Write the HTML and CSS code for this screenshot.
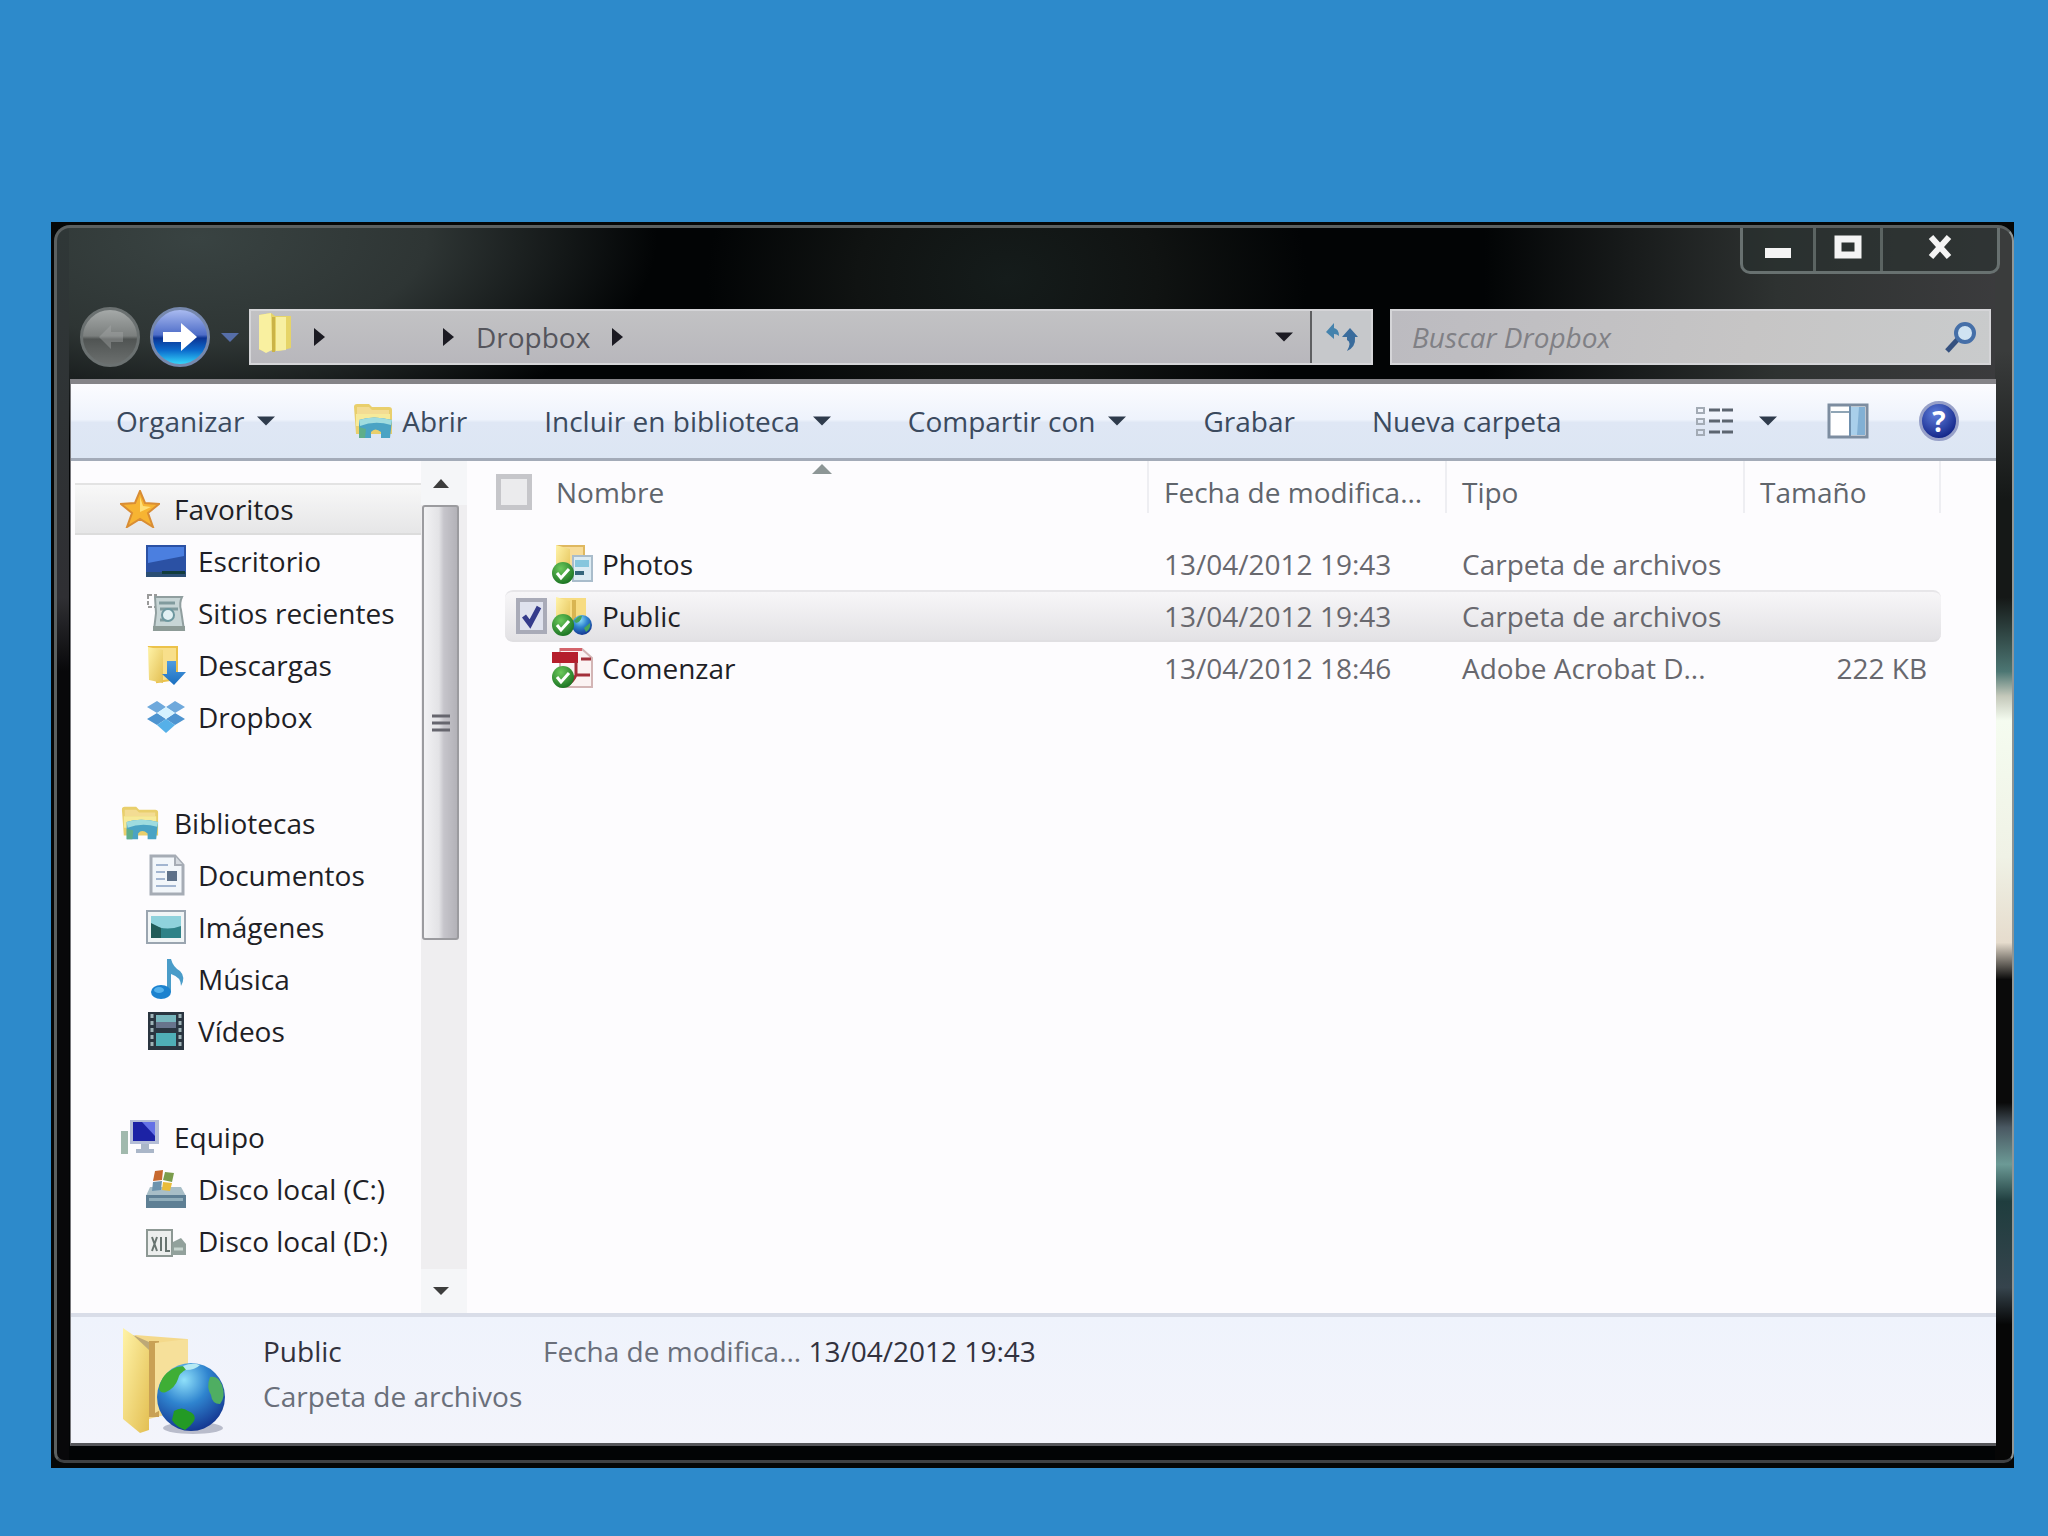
FILE: index.html
```html
<!DOCTYPE html>
<html lang="es">
<head>
    <meta charset="UTF-8">
    <meta name="viewport" content="width=device-width, initial-scale=1.0">
    <title>Dropbox</title>
    <link rel="stylesheet" href="styles.css">
</head>
<body>
    <!-- Shared icons -->
    <svg class="defs" width="0" height="0" aria-hidden="true">
        <defs>
            <linearGradient id="folder" x1="0" y1="0" x2="1" y2="1">
                <stop offset="0" stop-color="#fff3a8"/>
                <stop offset="1" stop-color="#e3bf52"/>
            </linearGradient>
            <linearGradient id="blue" x1="0" y1="0" x2="0" y2="1">
                <stop offset="0" stop-color="#4f9be0"/>
                <stop offset="1" stop-color="#1a6fc0"/>
            </linearGradient>
            <radialGradient id="globe" cx="0.4" cy="0.25" r="0.8">
                <stop offset="0" stop-color="#8fe0fa"/>
                <stop offset="0.45" stop-color="#2f84cf"/>
                <stop offset="1" stop-color="#12308c"/>
            </radialGradient>
            <radialGradient id="green" cx="0.4" cy="0.3" r="0.8">
                <stop offset="0" stop-color="#6cc95c"/>
                <stop offset="1" stop-color="#126a1c"/>
            </radialGradient>
        </defs>
        <symbol id="down" viewBox="0 0 20 10"><path d="M0 0h20L10 10z" fill="currentColor"/></symbol>
        <symbol id="right" viewBox="0 0 11 18"><path d="M0 0l11 9-11 9z" fill="currentColor"/></symbol>
        <symbol id="library" viewBox="0 0 42 36">
            <path d="M2 4q0-3 3-3h12l3 3h17q3 0 3 3v24H4z" fill="#e9cf6c"/>
            <path d="M5 4h12l3 3h17v4H5z" fill="#f3dc93"/>
            <path d="M4 11h34v12H4z" fill="#f6ea9a"/>
            <path d="M7 17q14-5 33 0l-2 18h-9v-6q-6-5-10 0v6H7z" fill="#4aa3c4"/>
            <path d="M7 17q14-5 33 0l-1 5q-16-5-31 1z" fill="#9fdcdf"/>
            <path d="M7 24l7 2-1 9H7z" fill="#5fae8a"/>
        </symbol>
        <symbol id="check" viewBox="0 0 24 24">
            <circle cx="12" cy="12" r="11" fill="url(#green)"/>
            <path d="M6 12l4 5 8-9" fill="none" stroke="#fff" stroke-width="3"/>
        </symbol>
    </svg>

    <main class="window">
        <div class="frame">
            <div class="titlebar">
                <div class="caption">
                    <button class="cap" aria-label="Minimizar"><svg width="28" height="12"><rect x="1" y="1" width="26" height="10" fill="#f4f4f4"/></svg></button>
                    <button class="cap" aria-label="Maximizar"><svg width="28" height="24"><path d="M4 4h20v16H4z" fill="none" stroke="#f4f4f4" stroke-width="7"/></svg></button>
                    <button class="cap close" aria-label="Cerrar"><svg width="26" height="24"><path d="M4 2l18 20M22 2L4 22" stroke="#f4f4f4" stroke-width="6"/></svg></button>
                </div>
            </div>

            <div class="navbar">
                <button class="round back" aria-label="Atrás">
                    <svg width="36" height="36" viewBox="0 0 36 36"><path d="M19 6L7 18l12 12v-7h12V13H19z" fill="#a7aaa9" opacity="0.4"/></svg>
                </button>
                <button class="round forward" aria-label="Adelante">
                    <svg width="36" height="36" viewBox="0 0 36 36"><path d="M19 4l16 14-16 14v-9H1V13h18z" fill="#fff"/></svg>
                </button>
                <button class="history" aria-label="Historial"><svg width="18" height="9"><use href="#down"/></svg></button>
                <nav class="address" aria-label="Ruta">
                    <svg class="path-folder" width="34" height="42" viewBox="0 0 34 42">
                        <path d="M1 3L13 1l4 3h16v32l-12 3L1 38z" fill="#e6d468"/>
                        <path d="M1 3l12-2 1 37-6 3-7-4z" fill="#f9f0a0"/>
                        <path d="M18 5h10v33l-10 1z" fill="#f7efa2"/>
                        <path d="M14 5h3v35h-3z" fill="#cbb347"/>
                    </svg>
                    <svg class="crumb-arrow" width="11" height="18"><use href="#right"/></svg>
                    <span class="crumb-empty"></span>
                    <svg class="crumb-arrow" width="11" height="18"><use href="#right"/></svg>
                    <a class="crumb" href="#">Dropbox</a>
                    <svg class="crumb-arrow" width="11" height="18"><use href="#right"/></svg>
                    <button class="address-drop" aria-label="Ubicaciones anteriores"><svg width="18" height="10"><use href="#down"/></svg></button>
                    <button class="refresh" aria-label="Actualizar">
                        <svg width="34" height="30" viewBox="0 0 34 30">
                            <path d="M1 10L9 1v5q5 1 5 8-2-2-5-2v5z" fill="#4583ad"/>
                            <path d="M33 15l-8-9-8 9h5v3q5 2 0 11 9-4 8-14z" fill="#3a6c9c"/>
                        </svg>
                    </button>
                </nav>
                <div class="search">
                    <input type="search" placeholder="Buscar Dropbox" aria-label="Buscar Dropbox">
                    <svg width="32" height="32" viewBox="0 0 32 32">
                        <path d="M2 30l11-12" stroke="#35517f" stroke-width="5"/>
                        <circle cx="20" cy="12" r="9" fill="#cfe3f2" stroke="#456fa8" stroke-width="4"/>
                    </svg>
                </div>
            </div>

            <div class="client">
                <div class="toolbar">
                    <button class="tool">Organizar <svg class="caret" width="18" height="10"><use href="#down"/></svg></button>
                    <button class="tool open"><svg width="42" height="36"><use href="#library"/></svg> Abrir</button>
                    <button class="tool">Incluir en biblioteca <svg class="caret" width="18" height="10"><use href="#down"/></svg></button>
                    <button class="tool">Compartir con <svg class="caret" width="18" height="10"><use href="#down"/></svg></button>
                    <button class="tool">Grabar</button>
                    <button class="tool">Nueva carpeta</button>
                    <div class="tool-right">
                        <button class="tool view" aria-label="Cambiar la vista">
                            <svg width="40" height="32" viewBox="0 0 40 32">
                                <g fill="none" stroke="#a3abb5" stroke-width="2"><path d="M3 3h7v5H3zM3 14h7v5H3zM3 25h7v5H3z"/></g>
                                <path d="M15 5h25M15 16h25M15 27h25" stroke="#5c6570" stroke-width="3" stroke-dasharray="11 2"/>
                            </svg>
                            <svg class="caret" width="18" height="10"><use href="#down"/></svg>
                        </button>
                        <button class="tool" aria-label="Panel de vista previa">
                            <svg width="42" height="36" viewBox="0 0 42 36">
                                <rect x="2" y="2" width="38" height="32" fill="#fff" stroke="#7d8da0" stroke-width="3"/>
                                <path d="M4 9h20" stroke="#8fa5b5" stroke-width="2"/>
                                <path d="M23 4h15v28H23z" fill="#a9cfea"/>
                                <path d="M32 4h6v28h-8z" fill="#82b0d4"/>
                                <path d="M23 3v30" stroke="#6f90ae" stroke-width="2"/>
                            </svg>
                        </button>
                        <button class="help" aria-label="Ayuda">?</button>
                    </div>
                </div>

                <div class="content">
                    <aside class="sidebar">
                        <ul class="tree">
                            <li><a class="group active" href="#"><svg width="40" height="38" viewBox="0 0 40 38"><path d="M20 1l5 12 14 1-11 9 5 14-13-8-13 8 5-14L1 14l14-1z" fill="#f7b432" stroke="#d98d34" stroke-width="2"/><path d="M20 7l3 9 8 1-11 5z" fill="#ffdf77"/></svg>Favoritos</a></li>
                            <li><a class="leaf" href="#"><svg width="40" height="32" viewBox="0 0 40 32"><rect width="40" height="32" fill="#2b51a4"/><path d="M2 2h36v9L2 18z" fill="#4b7fe0"/><path d="M0 27h40v5H0z" fill="#2b4e74"/><path d="M16 26h23v3H16z" fill="#123c3c"/></svg>Escritorio</a></li>
                            <li><a class="leaf" href="#"><svg width="40" height="40" viewBox="0 0 40 40"><path d="M2 2h8v12H2z" fill="none" stroke="#9a9a9a" stroke-width="2" stroke-dasharray="4 2"/><path d="M9 4h27q-3 6-1 13l3 20H8l2-17z" fill="#c7d5d6" stroke="#909e9f" stroke-width="2"/><path d="M13 10h16M14 16h18M14 27h7" stroke="#819b9e" stroke-width="3"/><circle cx="22" cy="22" r="6" fill="#e2f1f4" stroke="#6d979f" stroke-width="2"/><path d="M7 33h32v5H7z" fill="#8d9b97"/></svg>Sitios recientes</a></li>
                            <li><a class="leaf" href="#"><svg width="40" height="42" viewBox="0 0 40 42"><path d="M3 3h28v32l-20 3z" fill="#f8df8b" stroke="#ecc24a" stroke-width="2"/><path d="M2 3l15 3v33l-14-3z" fill="url(#folder)"/><path d="M21 17h9v11h10L28 41 16 30h5z" fill="url(#blue)"/></svg>Descargas</a></li>
                            <li><a class="leaf" href="#"><svg width="40" height="34" viewBox="0 0 40 34"><path d="M11 1l9 6-9 6-10-6zM29 1l10 6-10 6-9-6z" fill="#6fa9dc"/><path d="M11 13l9 6-9 6-10-6zM29 13l10 6-10 6-9-6z" fill="#4e94d0"/><path d="M11 25l9-6 9 6-9 8z" fill="#56b0e8"/><path d="M11 13l9-6 9 6-9 6z" fill="#d5f2ff"/></svg>Dropbox</a></li>
                        </ul>
                        <ul class="tree">
                            <li><a class="group" href="#"><svg width="40" height="36"><use href="#library"/></svg>Bibliotecas</a></li>
                            <li><a class="leaf" href="#"><svg width="40" height="42" viewBox="0 0 40 42"><path d="M5 2h24l8 9v29H5z" fill="#f2f6fa" stroke="#a6acb5" stroke-width="3"/><path d="M29 2v9h8" fill="#d5dae0" stroke="#a6acb5" stroke-width="2"/><path d="M10 11h12M10 18h9M10 25h9M10 32h20" stroke="#a2b5d0" stroke-width="2"/><path d="M21 17h10v10H21z" fill="#5e7189"/></svg>Documentos</a></li>
                            <li><a class="leaf" href="#"><svg width="40" height="34" viewBox="0 0 40 34"><rect x="1" y="1" width="38" height="32" fill="#f1f5f6" stroke="#9aa5b0" stroke-width="2"/><path d="M5 6h30v22H5z" fill="#8fd2dc"/><path d="M5 14q14 8 30 2v12H5z" fill="#2f8288"/><path d="M5 13l10 5v10H5z" fill="#215b58"/></svg>Imágenes</a></li>
                            <li><a class="leaf" href="#"><svg width="40" height="42" viewBox="0 0 40 42"><path d="M21 1h4q2 8 9 12 6 6 1 15 0-9-10-12v18h-4z" fill="#4a9cc9"/><ellipse cx="15" cy="34" rx="10" ry="7" fill="#1c82cf"/><ellipse cx="13" cy="32" rx="5" ry="3" fill="#54b1ec"/></svg>Música</a></li>
                            <li><a class="leaf" href="#"><svg width="40" height="38" viewBox="0 0 40 38"><rect x="2" width="36" height="38" fill="#2a3540"/><path d="M10 3h20v13H10z" fill="#77b6bd"/><path d="M10 21h20v13H10z" fill="#4faeb6"/><path d="M10 10h20v6H10z" fill="#68748c"/><path d="M6 2v35M34 2v35" stroke="#9fb4b8" stroke-width="3" stroke-dasharray="4 3"/></svg>Vídeos</a></li>
                        </ul>
                        <ul class="tree">
                            <li><a class="group" href="#"><svg width="40" height="36" viewBox="0 0 40 36"><path d="M1 12h7v23H1z" fill="#a1b9ad"/><path d="M10 1h29v24H10z" fill="#b4bdd6"/><path d="M13 3h22v19H13z" fill="#1c22a5"/><path d="M22 3h13v14z" fill="#6471e6"/><path d="M21 25h8v5h5v4H16v-4h5z" fill="#aab6c8"/></svg>Equipo</a></li>
                            <li><a class="leaf" href="#"><svg width="40" height="40" viewBox="0 0 40 40"><path d="M4 18h31l5 9H0z" fill="#a8bec7"/><path d="M0 26h40v13H0z" fill="#5e7f94"/><path d="M3 29h34v3H3z" fill="#91aebb"/><path d="M9 2l8-1-1 10-9 1z" fill="#c7682e"/><path d="M19 3l9 1-2 9-9-2z" fill="#7b9c4c"/><path d="M7 13l9-1-1 9-9 1z" fill="#6c93ad"/><path d="M17 13l9 1-2 8-8-1z" fill="#e9bc3b"/></svg>Disco local (C:)</a></li>
                            <li><a class="leaf" href="#"><svg width="40" height="32" viewBox="0 0 40 32"><path d="M1 5h25v26H1z" fill="#eceeed" stroke="#8d9894" stroke-width="2"/><path d="M6 12l5 14M11 12L6 26M15 12v14M20 12v14h4" stroke="#67736f" stroke-width="2" fill="none"/><path d="M27 17l8-4 5 6v11H25z" fill="#92a19c"/><path d="M28 24h9" stroke="#c7d4cf" stroke-width="3"/></svg>Disco local (D:)</a></li>
                        </ul>
                    </aside>

                    <div class="scrollbar" aria-hidden="true">
                        <span class="scroll-arrow"><svg width="16" height="9" viewBox="0 0 16 9"><path d="M0 9L8 0l8 9z" fill="#3d3d3d"/></svg></span>
                        <span class="track">
                            <span class="thumb"><svg width="20" height="20"><path d="M1 3h18M1 10h18M1 17h18" stroke="#66666e" stroke-width="3"/></svg></span>
                        </span>
                        <span class="scroll-arrow"><svg width="18" height="8" viewBox="0 0 20 10"><use href="#down"/></svg></span>
                    </div>

                    <section class="files">
                        <table>
                            <colgroup>
                                <col class="col-edge"><col><col class="col-date"><col class="col-type"><col class="col-size">
                            </colgroup>
                            <thead>
                                <tr>
                                    <th colspan="2" class="th-name">
                                        <div class="name-head">
                                            <input type="checkbox" class="box all" id="all" aria-label="Seleccionar todo">
                                            <label for="all">Nombre</label>
                                        </div>
                                        <svg class="sort" width="20" height="10"><path d="M0 10L10 0l10 10z" fill="#8d9696"/></svg>
                                    </th>
                                    <th>Fecha de modifica...</th>
                                    <th>Tipo</th>
                                    <th>Tamaño</th>
                                </tr>
                            </thead>
                            <tbody>
                                <tr>
                                    <td></td>
                                    <td>
                                        <div class="name">
                                            <input type="checkbox" class="box idle" id="photos">
                                            <svg width="43" height="42" viewBox="0 0 43 42"><path d="M6 3h27v28H6z" fill="#f7dc9a" stroke="#dfb860" stroke-width="2"/><path d="M5 2l14 4v30L5 32z" fill="url(#folder)"/><path d="M22 13h19v25H22z" fill="#dcebf3" stroke="#a9bccb" stroke-width="2"/><path d="M24 17h14v7H24z" fill="#86c6dd"/><path d="M24 28h9v4h-9z" fill="#35667c"/><use href="#check" y="18" width="24" height="24"/></svg>
                                            <label for="photos">Photos</label>
                                        </div>
                                    </td>
                                    <td>13/04/2012 19:43</td>
                                    <td>Carpeta de archivos</td>
                                    <td></td>
                                </tr>
                                <tr class="selected">
                                    <td></td>
                                    <td>
                                        <div class="name">
                                            <input type="checkbox" class="box" id="public" checked>
                                            <svg width="43" height="42" viewBox="0 0 43 42"><path d="M6 3h29v25H6z" fill="#f7dc82"/><path d="M5 2l14 4v30L5 32z" fill="url(#folder)"/><path d="M21 5h4v24h-4z" fill="#d9b551"/><circle cx="31" cy="30" r="10" fill="url(#globe)"/><path d="M23 26q5-6 8-5-1 6-6 7zM33 33l6-5q1 6-4 9z" fill="#46a55c"/><use href="#check" y="18" width="24" height="24"/></svg>
                                            <label for="public">Public</label>
                                        </div>
                                    </td>
                                    <td>13/04/2012 19:43</td>
                                    <td>Carpeta de archivos</td>
                                    <td></td>
                                </tr>
                                <tr>
                                    <td></td>
                                    <td>
                                        <div class="name">
                                            <input type="checkbox" class="box idle" id="comenzar">
                                            <svg width="43" height="42" viewBox="0 0 43 42"><path d="M9 2h22l10 9v29H9z" fill="#fbf3f3" stroke="#d3b5b5" stroke-width="2"/><path d="M9 1h22v3H9z" fill="#d4636b"/><path d="M1 5h26v11H1z" fill="#b51e2c"/><path d="M25 15v13h14M25 28q-3 7-8 9M30 12h10" stroke="#a3303a" stroke-width="3" fill="none"/><use href="#check" y="18" width="24" height="24"/></svg>
                                            <label for="comenzar">Comenzar</label>
                                        </div>
                                    </td>
                                    <td>13/04/2012 18:46</td>
                                    <td>Adobe Acrobat D...</td>
                                    <td class="size">222 KB</td>
                                </tr>
                            </tbody>
                        </table>
                    </section>
                </div>

                <!-- Details pane -->
                <footer class="details">
                    <svg class="details-icon" width="106" height="108" viewBox="0 0 106 108">
                        <path d="M14 8l52 4v70l-38 10z" fill="#f4d98b"/>
                        <path d="M28 14h10v76H28z" fill="#c9a155"/>
                        <path d="M34 16l33-4v56L34 86z" fill="#f6e09a"/>
                        <path d="M2 1l26 18v84l-9 3L2 92z" fill="url(#folder)"/>
                        <path d="M12 8l16 7v8z" fill="#bda877"/>
                        <ellipse cx="72" cy="101" rx="30" ry="6" fill="#b9bccb"/>
                        <circle cx="70" cy="70" r="34" fill="url(#globe)"/>
                        <path d="M38 62q2-16 18-22 9-2 10 2-8 4-9 10-3 9-12 13-5 2-7-3z" fill="#3fae35"/>
                        <path d="M89 50q8-2 12 8 4 12-2 19-8 0-9-9-5-8-1-18z" fill="#4fae62"/>
                        <path d="M53 84q8-5 14 0 9 3 6 10-4 6-9 9-10-4-13-10z" fill="#239a25"/>
                        <path d="M62 39q9-4 17-1-5 5-14 5z" fill="#b5eaf3"/>
                    </svg>
                    <div class="details-title">
                        <div class="dark">Public</div>
                        <div>Carpeta de archivos</div>
                    </div>
                    <div class="details-date">Fecha de modifica... <span class="dark">13/04/2012 19:43</span></div>
                </footer>
            </div>
        </div>
    </main>
</body>
</html>
```

FILE: styles.css
```css
* {
    box-sizing: border-box;
}
body {
    margin: 0;
    min-height: 100vh;
    padding: 222px 34px 68px 51px;
    display: flex;
    flex-direction: column;
    background-color: #2d8acb;
    font-family: "Open Sans", "Noto Sans", sans-serif;
    font-size: 28px;
    line-height: 36px;
    color: #1f1f26;
}
button {
    font: inherit;
    color: inherit;
    background: none;
    border: none;
    padding: 0;
    cursor: pointer;
}
a {
    color: inherit;
    text-decoration: none;
}
svg {
    display: block;
    flex: none;
}
.defs {
    position: absolute;
}

/* Window frame */
.window {
    flex: 1;
    display: flex;
    background: #050707;
    padding: 3px 0 5px 3px;
}
.frame {
    flex: 1;
    display: flex;
    flex-direction: column;
    min-width: 0;
    border: 3px solid #5b6060;
    border-right: 2px solid #8f9696;
    border-bottom-color: #3f4143;
    border-radius: 16px 16px 10px 10px;
    background:
        linear-gradient(180deg, #3a3c3c 0, #3a3c3c 10%, #151817 22%, #151817 30%, #4c7673 36%, #c4c8ba 38%, #f5fcf0 40%, #f0f2e6 51%, #e6dccd 58%, #0a0a0a 61%, #0a0a0a 71%, #4a5862 73%, #6c9a96 76%, #1f3d3e 79%, #36444d 86%, #060606 89%) right top / 17px 100% no-repeat,
        linear-gradient(180deg, #2f3737 0, #2f2f33 30%, #08080a 36%, #08080a 100%) left top / 12px 100% no-repeat,
        radial-gradient(ellipse 460px 210px at 140px 10px, #394342 0, #2e3534 50%, transparent 100%),
        radial-gradient(ellipse 300px 220px at 950px 50px, #151c1b 0, #101312 50%, transparent 100%),
        linear-gradient(90deg, transparent 73%, #2e3231 88%, #3c3c3e 100%) left top / 100% 170px no-repeat,
        #020405;
}
.titlebar {
    display: flex;
    justify-content: flex-end;
    height: 79px;
    padding-right: 12px;
}
.caption {
    display: flex;
    height: 46px;
    border: 3px solid #687170;
    border-top: none;
    border-radius: 0 0 10px 10px;
    background: rgba(40, 48, 46, 0.6);
}
.cap {
    width: 67px;
    display: flex;
    align-items: center;
    justify-content: center;
    padding-bottom: 6px;
    border-right: 3px solid #5b6462;
}
.cap:first-child {
    width: 73px;
    align-items: flex-end;
    padding-bottom: 12px;
}
.cap.close {
    width: 114px;
    border-right: none;
}

/* Navigation row */
.navbar {
    display: flex;
    align-items: center;
    height: 60px;
    margin: 0 21px 12px 23px;
}
.round {
    width: 60px;
    height: 60px;
    flex: none;
    display: flex;
    align-items: center;
    justify-content: center;
    border-radius: 50%;
    border: 3px solid #6b7171;
}
.back {
    background: linear-gradient(180deg, #a5a9a8 0, #7b7f7e 48%, #505453 54%, #6b6f6e 100%);
}
.forward {
    margin-left: 10px;
    border-color: #7688ad;
    background: linear-gradient(180deg, #a9baf0 0, #4e6dc8 46%, #0b3394 52%, #0c6ccd 75%, #35d5fa 100%);
}
.history {
    width: 39px;
    flex: none;
    display: flex;
    justify-content: center;
    color: #566ea8;
}
.address {
    flex: 1;
    min-width: 0;
    height: 56px;
    display: flex;
    align-items: center;
    padding-left: 7px;
    border: 2px solid #d5d5d8;
    background: linear-gradient(180deg, #c2c2c4, #b8b7bc);
    color: #1b1a22;
}
.path-folder {
    margin-bottom: 8px;
    margin-right: 22px;
}
.crumb-empty {
    width: 118px;
}
.crumb {
    margin: 0 22px;
    color: #55555c;
}
.address-drop {
    margin-left: auto;
    margin-right: 17px;
}
.refresh {
    width: 61px;
    align-self: stretch;
    display: flex;
    align-items: center;
    justify-content: center;
    border-left: 2px solid #5e5f61;
    background: #c6c8cb;
}
.search {
    width: 601px;
    height: 56px;
    flex: none;
    margin-left: 17px;
    display: flex;
    align-items: center;
    padding: 0 12px 0 20px;
    border: 2px solid #d5d5d8;
    background: linear-gradient(100deg, #bcbbc0, #c6c5c5 60%, #c9cbcc);
}
.search input {
    flex: 1;
    min-width: 0;
    border: none;
    padding: 0;
    outline: none;
    background: none;
    font: inherit;
    color: #55555c;
}
.search input::placeholder {
    font-style: italic;
    color: #808085;
    opacity: 1;
}

/* Client area */
.client {
    flex: 1;
    display: flex;
    flex-direction: column;
    min-width: 0;
    margin: 0 16px 14px 13px;
    border-top: 5px solid #858488;
    border-left: 1px solid #77777b;
    border-bottom: 3px solid #55565a;
    background: #fdfcfe;
}
.toolbar {
    display: flex;
    align-items: center;
    gap: 77px;
    height: 77px;
    padding: 0 37px 0 45px;
    border-bottom: 3px solid #a3abb8;
    background: linear-gradient(180deg, #fcfcff 0, #eef3fc 48%, #dfe7f5 52%, #dce6f3 100%);
    color: #3b4a5e;
}
.tool {
    display: flex;
    align-items: center;
    gap: 13px;
    white-space: nowrap;
}
.open {
    gap: 8px;
}
.caret {
    color: #2e3b4c;
}
.tool-right {
    margin-left: auto;
    display: flex;
    align-items: center;
    gap: 50px;
}
.view {
    gap: 25px;
}
.help {
    width: 40px;
    height: 40px;
    border-radius: 50%;
    border: 3px solid #97a0c8;
    background: radial-gradient(circle at 40% 30%, #5f7fdc, #16298c 75%);
    color: #fff;
    font-weight: 700;
    line-height: 32px;
}
.content {
    flex: 1;
    display: flex;
    min-height: 0;
}

/* Folder tree */
.sidebar {
    width: 350px;
    padding: 22px 0 0 4px;
}
.tree {
    list-style: none;
    margin: 0 0 54px;
    padding: 0;
}
.tree:last-child {
    margin-bottom: 0;
}
.group,
.leaf {
    height: 52px;
    display: flex;
    align-items: center;
    white-space: nowrap;
}
.group {
    gap: 14px;
    padding-left: 45px;
}
.leaf {
    gap: 12px;
    padding-left: 71px;
}
.active {
    border-top: 2px solid #e3e3e3;
    border-bottom: 2px solid #dcdcdc;
    background: linear-gradient(180deg, #f8f8f8, #e6e6e7);
}
.scrollbar {
    width: 46px;
    display: flex;
    flex-direction: column;
    align-items: stretch;
    background: #efeef0;
    color: #3d3d3d;
}
.scroll-arrow {
    height: 44px;
    display: flex;
    align-items: center;
    justify-content: center;
    padding-right: 6px;
    background: #f5f6f8;
}
.track {
    flex: 1;
}
.thumb {
    display: flex;
    align-items: center;
    justify-content: center;
    width: 37px;
    height: 57%;
    margin-left: 1px;
    border: 2px solid #9b9b9f;
    border-radius: 3px;
    background: linear-gradient(90deg, #f2f2f4 0, #e3e3e6 45%, #c6c5cb 60%, #b3b2b8 100%);
}

/* File list */
.files {
    flex: 1;
    min-width: 0;
    padding: 0 55px 0 21px;
}
table {
    width: 100%;
    table-layout: fixed;
    border-collapse: separate;
    border-spacing: 0;
    color: #68686e;
}
.col-edge {
    width: 17px;
}
.col-date,
.col-type {
    width: 298px;
}
.col-size {
    width: 196px;
}
th {
    position: relative;
    height: 52px;
    padding: 10px 0 0 15px;
    border-right: 2px solid #eeeef2;
    text-align: left;
    font-weight: 400;
    color: #60656c;
    white-space: nowrap;
}
.th-name {
    padding-left: 8px;
}
.name-head {
    display: flex;
    align-items: center;
    gap: 24px;
}
.sort {
    position: absolute;
    top: 3px;
    left: 50%;
    margin-left: -6px;
}
thead::after {
    content: "";
    display: block;
    height: 25px;
}
td {
    height: 52px;
    padding: 0 0 0 15px;
    white-space: nowrap;
}
td:first-child {
    padding: 0;
}
td:nth-child(2) {
    padding-left: 11px;
}
td.size {
    padding-right: 14px;
    text-align: right;
}
.name {
    display: flex;
    align-items: center;
    color: #1f1f26;
}
.name svg {
    margin: 0 8px 0 4px;
}
.selected td:not(:first-child) {
    border-top: 2px solid #e7e6e9;
    border-bottom: 2px solid #e0dfe2;
    background: linear-gradient(180deg, #f7f6f8, #e3e2e5);
}
.selected td:nth-child(2) {
    border-radius: 8px 0 0 8px;
}
.selected td:last-child {
    border-radius: 0 8px 8px 0;
}
.box {
    appearance: none;
    flex: none;
    width: 31px;
    height: 36px;
    margin: 0;
    border: 4px solid #a9abb8;
    background: #dfe2ee;
}
.box:checked {
    background: #dfe2ee url("data:image/svg+xml,%3Csvg xmlns='http://www.w3.org/2000/svg' viewBox='0 0 23 28'%3E%3Cpath d='M4 14l6 8L19 5' fill='none' stroke='%23353c8c' stroke-width='5'/%3E%3C/svg%3E") center / 100% 100% no-repeat;
}
.box.all {
    width: 36px;
    border: 5px solid #c6c6ca;
    background: #ebebed;
}
.idle {
    opacity: 0;
}

/* Details pane */
.details {
    display: flex;
    height: 130px;
    padding: 10px 0 0 50px;
    border-top: 4px solid #d9dde8;
    background: linear-gradient(180deg, #eff3fc, #f3f4fb);
    color: #6a6f7a;
    white-space: nowrap;
}
.dark {
    color: #32323e;
}
.details-title {
    width: 280px;
    margin-left: 36px;
    padding-top: 6px;
}
.details-title .dark {
    margin-bottom: 9px;
}
.details-date {
    padding-top: 6px;
}
```
